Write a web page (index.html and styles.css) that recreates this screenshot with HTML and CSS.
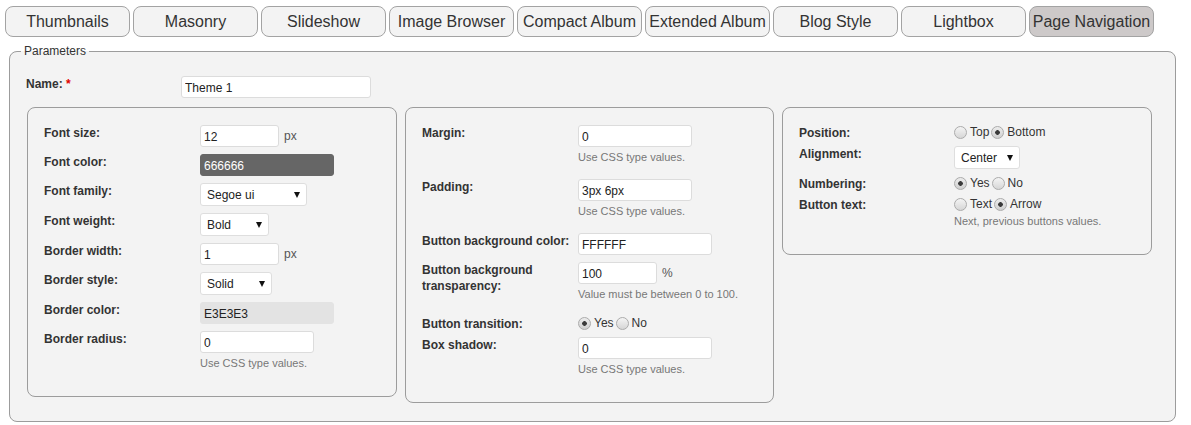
FILE: index.html
```html
<!DOCTYPE html>
<html>
<head>
<meta charset="utf-8">
<title>Page Navigation</title>
<link rel="stylesheet" href="styles.css">
</head>
<body>
<div class="page">
  <nav class="tabs">
    <button class="tab">Thumbnails</button>
    <button class="tab">Masonry</button>
    <button class="tab">Slideshow</button>
    <button class="tab">Image Browser</button>
    <button class="tab">Compact Album</button>
    <button class="tab">Extended Album</button>
    <button class="tab">Blog Style</button>
    <button class="tab">Lightbox</button>
    <button class="tab active">Page Navigation</button>
  </nav>

  <fieldset class="params">
    <legend>Parameters</legend>
    <div class="name-row">
      <label class="lbl name-lbl">Name: <span class="req">*</span></label>
      <input class="inp w-name" value="Theme 1">
    </div>

    <div class="boxes">
      <div class="box">
        <div class="row"><label class="lbl">Font size:</label><div class="ctl"><div class="line"><input class="inp w-s" value="12"><span class="unit">px</span></div></div></div>
        <div class="row"><label class="lbl">Font color:</label><div class="ctl"><input class="inp w-l clr-dark" value="666666"></div></div>
        <div class="row"><label class="lbl">Font family:</label><div class="ctl"><div class="sel w-ff"><span>Segoe ui</span><span class="caret"></span></div></div></div>
        <div class="row"><label class="lbl">Font weight:</label><div class="ctl"><div class="sel w-fw"><span>Bold</span><span class="caret"></span></div></div></div>
        <div class="row"><label class="lbl">Border width:</label><div class="ctl"><div class="line"><input class="inp w-s" value="1"><span class="unit">px</span></div></div></div>
        <div class="row"><label class="lbl">Border style:</label><div class="ctl"><div class="sel w-bs"><span>Solid</span><span class="caret"></span></div></div></div>
        <div class="row"><label class="lbl">Border color:</label><div class="ctl"><input class="inp w-l clr-light" value="E3E3E3"></div></div>
        <div class="row"><label class="lbl">Border radius:</label><div class="ctl"><input class="inp w-m" value="0"><div class="help">Use CSS type values.</div></div></div>
      </div>

      <div class="box box-mid">
        <div class="row"><label class="lbl">Margin:</label><div class="ctl"><input class="inp w-m" value="0"><div class="help">Use CSS type values.</div></div></div>
        <div class="row"><label class="lbl">Padding:</label><div class="ctl"><input class="inp w-m" value="3px 6px"><div class="help">Use CSS type values.</div></div></div>
        <div class="row"><label class="lbl">Button background color:</label><div class="ctl"><input class="inp w-l" value="FFFFFF"></div></div>
        <div class="row"><label class="lbl">Button background transparency:</label><div class="ctl"><div class="line"><input class="inp w-s" value="100"><span class="unit">%</span></div><div class="help">Value must be between 0 to 100.</div></div></div>
        <div class="row"><label class="lbl">Button transition:</label><div class="ctl"><div class="radios"><input type="radio" class="rd" name="bt" checked><span class="rt">Yes</span><input type="radio" class="rd" name="bt"><span class="rt">No</span></div></div></div>
        <div class="row"><label class="lbl">Box shadow:</label><div class="ctl"><input class="inp w-l" value="0"><div class="help">Use CSS type values.</div></div></div>
      </div>

      <div class="box box-right">
        <div class="row"><label class="lbl">Position:</label><div class="ctl"><div class="radios"><input type="radio" class="rd" name="pos"><span class="rt">Top</span><input type="radio" class="rd" name="pos" checked><span class="rt">Bottom</span></div></div></div>
        <div class="row"><label class="lbl">Alignment:</label><div class="ctl"><div class="sel w-al"><span>Center</span><span class="caret"></span></div></div></div>
        <div class="row"><label class="lbl">Numbering:</label><div class="ctl"><div class="radios"><input type="radio" class="rd" name="num" checked><span class="rt">Yes</span><input type="radio" class="rd" name="num"><span class="rt">No</span></div></div></div>
        <div class="row"><label class="lbl">Button text:</label><div class="ctl"><div class="radios"><input type="radio" class="rd" name="btxt"><span class="rt">Text</span><input type="radio" class="rd" name="btxt" checked><span class="rt">Arrow</span></div><div class="help">Next, previous buttons values.</div></div></div>
      </div>
    </div>
  </fieldset>
</div>
</body>
</html>
```

FILE: styles.css
```css
html, body {
  margin: 0;
  padding: 0;
  background: #ffffff;
  font-family: "Liberation Sans", Arial, sans-serif;
  color: #333;
}

.page {
  padding: 6px 5px 0 5px;
}

.tabs {
  display: flex;
  gap: 3px;
}

.tab {
  width: 125px;
  height: 31px;
  padding: 0;
  margin: 0;
  box-sizing: border-box;
  border: 1px solid #a3a3a3;
  border-radius: 8px;
  background: #f3f3f3;
  font-family: "Liberation Sans", Arial, sans-serif;
  font-size: 16px;
  color: #333;
  white-space: nowrap;
  text-align: center;
  line-height: 28px;
}

.tab.active {
  background: #cdc9c9;
}

.params {
  box-sizing: border-box;
  width: 1167px;
  margin: 7px 0 0 4px;
  padding: 18px 16px 18px 16px;
  border: 1px solid #9c9c9c;
  border-radius: 8px;
  background: #f3f3f3;
  min-inline-size: 0;
}

.params legend {
  font-size: 12px;
  line-height: 14px;
  color: #333;
  padding: 0 3px;
  margin-left: -5px;
}

.name-row {
  display: flex;
  align-items: flex-start;
}

.name-lbl {
  width: 155px;
  flex: none;
}

.req {
  color: #e00000;
}

.lbl {
  font-size: 12px;
  font-weight: bold;
  line-height: 16px;
  margin: 0 0 -2px 0;
  color: #333;
}

.inp {
  box-sizing: border-box;
  height: 22px;
  margin: 0;
  padding: 1px 3px 0 3px;
  border: 1px solid #dcdcdc;
  border-radius: 3px;
  background: #fff;
  font-family: "Liberation Sans", Arial, sans-serif;
  font-size: 12px;
  color: #222;
  display: block;
  outline: none;
}

.w-name { width: 190px; }
.w-s { width: 79px; }
.w-m { width: 114px; }
.w-l { width: 134px; }

.clr-dark {
  background: #666666;
  border-color: #666666;
  color: #ffffff;
}

.clr-light {
  background: #e3e3e3;
  border-color: #e3e3e3;
  color: #222;
}

.boxes {
  display: flex;
  align-items: flex-start;
  gap: 8px;
  margin: 9px 0 0 1px;
}

.box {
  box-sizing: border-box;
  width: 370px;
  flex: none;
  border: 1px solid #9c9c9c;
  border-radius: 8px;
  padding: 17px 16px 18px 16px;
  display: flex;
  flex-direction: column;
  gap: 7px;
}

.box-mid {
  width: 369px;
}

.row {
  display: grid;
  grid-template-columns: 156px 1fr;
  align-items: start;
}

.box-right .row {
  grid-template-columns: 155px 1fr;
}

.ctl {
  display: flex;
  flex-direction: column;
  align-items: flex-start;
}

.line {
  display: flex;
  align-items: center;
}

.unit {
  margin-left: 5px;
  font-size: 12px;
  color: #555;
}

.help {
  font-size: 11px;
  line-height: 14px;
  color: #777;
  margin: 3px 0 8px 0;
  white-space: nowrap;
}

.sel {
  box-sizing: border-box;
  height: 23px;
  display: flex;
  align-items: center;
  justify-content: space-between;
  padding: 1px 6px 0 6px;
  border: 1px solid #dedede;
  border-radius: 3px;
  background: #fff;
  font-size: 12px;
  color: #222;
}

.caret {
  width: 0;
  height: 0;
  border-left: 3.5px solid transparent;
  border-right: 3.5px solid transparent;
  border-top: 6px solid #111;
}

.w-ff { width: 107px; }
.w-fw { width: 69px; }
.w-bs { width: 72px; }
.w-al { width: 66px; }

.radios {
  display: flex;
  align-items: center;
  height: 14px;
  font-size: 12px;
  color: #333;
}

.rd {
  -webkit-appearance: none;
  appearance: none;
  box-sizing: border-box;
  width: 13px;
  height: 13px;
  margin: 0 3px 0 0;
  border: 1px solid #ababab;
  border-radius: 50%;
  background: linear-gradient(#f4f4f4, #d6d6d6);
  flex: none;
}

.rd:checked {
  background: radial-gradient(circle, #3a3a3a 0, #3a3a3a 2px, transparent 2.6px), linear-gradient(#ececec, #cfcfcf);
}

.rt {
  margin-right: 2px;
}
```
